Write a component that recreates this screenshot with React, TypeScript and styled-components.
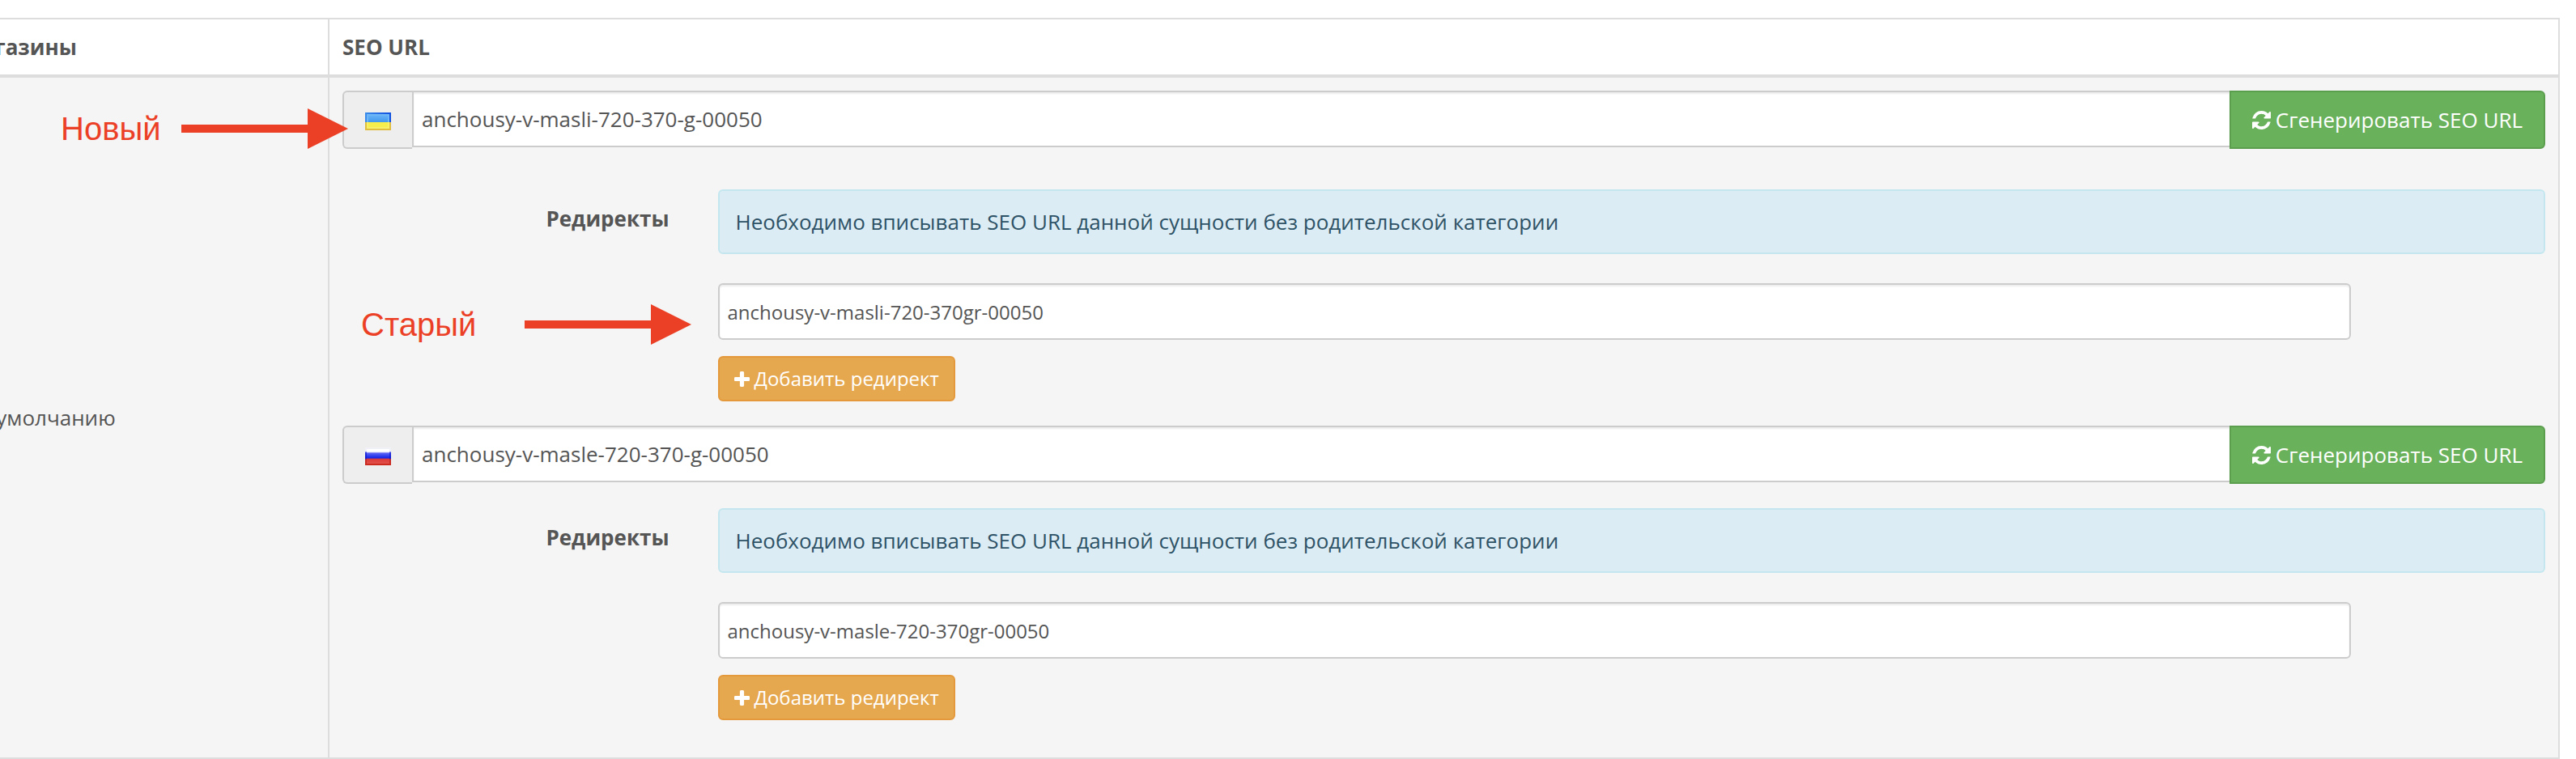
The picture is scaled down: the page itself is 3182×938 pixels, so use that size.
import React, { useState } from "react";
import styled, { createGlobalStyle } from "styled-components";

const GlobalStyle = createGlobalStyle`
  *, *::before, *::after { box-sizing: border-box; }
  body {
    margin: 0;
    background: #fff;
    color: #555;
    font-family: "Open Sans", sans-serif;
    font-size: 26px;
    line-height: 36px;
  }
`;

const Page = styled.main`
  position: relative;
  overflow: hidden;
  padding: 22px 20px 0 0;
`;

const TableScroller = styled.div`
  margin-left: -64px;
`;

const Table = styled.table`
  width: 100%;
  border: 2px solid #ddd;
  border-collapse: separate;
  border-spacing: 0;
`;

const HeadCell = styled.th`
  padding: 16px;
  text-align: left;
  font-weight: 700;
  border-bottom: 4px solid #ddd;
  & + & { border-left: 2px solid #ddd; }
`;

const StoreHeadCell = styled(HeadCell)`
  width: 467px;
`;

const Cell = styled.td`
  padding: 16px;
  vertical-align: middle;
  background: #f5f5f5;
  & + & { border-left: 2px solid #ddd; }
`;

const InputGroup = styled.div<{ $spaced?: boolean }>`
  display: flex;
  align-items: flex-start;
  margin-bottom: ${(p) => (p.$spaced ? 50 : 30)}px;
`;

const Addon = styled.label`
  display: flex;
  align-items: center;
  height: 72px;
  padding: 4px 26px 0;
  background: #eee;
  border: 2px solid #ccc;
  border-right: 0;
  border-radius: 6px 0 0 6px;
`;

const TextInput = styled.input`
  height: 70px;
  min-width: 0;
  margin: 0;
  padding: 0 10px;
  font: inherit;
  color: #555;
  background: #fff;
  border: 2px solid #ccc;
  box-shadow: inset 0 2px 2px rgba(0, 0, 0, 0.075);
  outline: 0;
`;

const UrlInput = styled(TextInput)`
  flex: 1;
  border-right: 0;
`;

const RedirectInput = styled(TextInput)`
  width: calc(100% - 240px);
  font-size: 24px;
  border-radius: 6px;
`;

const Button = styled.button`
  display: inline-flex;
  align-items: center;
  gap: 6px;
  margin: 0;
  font: inherit;
  color: #fff;
  border: 2px solid;
  white-space: nowrap;
  cursor: pointer;
`;

const GenerateButton = styled(Button)`
  padding: 16px 26px;
  background: #6ab15c;
  border-color: #5b9e4e;
  border-radius: 0 6px 6px 0;
`;

const AddButton = styled(Button)`
  padding: 8px 18px;
  font-size: 24px;
  background: #e6a84f;
  border-color: #e4993d;
  border-radius: 6px;
`;

const FormRow = styled.div`
  display: grid;
  grid-template-columns: 1fr 5fr;
  margin: 0 -30px 30px;
`;

const FieldLabel = styled.label`
  padding: 18px 30px 0;
  text-align: right;
  font-weight: 700;
`;

const FieldColumn = styled.div`
  display: flex;
  flex-direction: column;
  align-items: flex-start;
  gap: 20px;
  min-width: 0;
  padding: 0 30px;
`;

const Notice = styled.div`
  width: 100%;
  margin-bottom: 16px;
  padding: 20px;
  color: #2e5266;
  background: #dcecf5;
  border: 2px solid #c4e7ef;
  border-radius: 6px;
`;

const Annotation = styled.div<{ $top: number; $left: number; $gap: number }>`
  position: absolute;
  top: ${(p) => p.$top}px;
  left: ${(p) => p.$left}px;
  display: flex;
  align-items: center;
  gap: ${(p) => p.$gap}px;
  color: #ec4026;
  font: 40px/50px "Liberation Sans", Arial, sans-serif;
  pointer-events: none;
  svg { display: block; }
`;

const Arrow = () => (
  <svg width="206" height="50" viewBox="0 0 206 50" fill="currentColor" aria-hidden="true">
    <path d="M0 20H156V0L206 25L156 50V30H0Z" />
  </svg>
);

const RefreshIcon = () => (
  <svg width="23" height="23" viewBox="0 128 1536 1536" fill="currentColor" aria-hidden="true">
    <path d="M1511 1056q0 5-1 7-64 268-268 434.5t-478 166.5q-146 0-282.5-55t-243.5-157l-129 129q-19 19-45 19t-45-19-19-45v-448q0-26 19-45t45-19h448q26 0 45 19t19 45-19 45l-137 137q71 66 161 102t187 36q134 0 250-65t186-179q11-17 53-117 8-23 30-23h192q13 0 22.5 9.5t9.5 22.5zm25-800v448q0 26-19 45t-45 19h-448q-26 0-45-19t-19-45 19-45l138-138q-148-137-349-137-134 0-250 65t-186 179q-11 17-53 117-8 23-30 23h-199q-13 0-22.5-9.5t-9.5-22.5v-7q65-268 270-434.5t480-166.5q146 0 284 55.5t245 156.5l130-129q19-19 45-19t45 19 19 45z" />
  </svg>
);

const PlusIcon = () => (
  <svg width="19" height="19" viewBox="0 192 1408 1408" fill="currentColor" aria-hidden="true">
    <path d="M1408 800v192q0 40-28 68t-68 28h-416v416q0 40-28 68t-68 28h-192q-40 0-68-28t-28-68v-416h-416q-40 0-68-28t-28-68v-192q0-40 28-68t68-28h416v-416q0-40 28-68t68-28h192q40 0 68 28t28 68v416h416q40 0 68 28t28 68z" />
  </svg>
);

const UkraineFlag = () => (
  <svg width="32" height="22" viewBox="0 0 32 22" role="img" aria-label="Українська">
    <defs>
      <linearGradient id="ua-edge" x1="0" y1="0" x2="1" y2="0">
        <stop offset="0" stopColor="#3b8cea" />
        <stop offset="1" stopColor="#0f4fe0" />
      </linearGradient>
      <linearGradient id="ua-blue" x1="0" y1="0" x2="0" y2="1">
        <stop offset="0" stopColor="#62b0f6" />
        <stop offset="1" stopColor="#4297ee" />
      </linearGradient>
    </defs>
    <rect width="32" height="12" fill="url(#ua-edge)" />
    <rect x="2" y="2" width="28" height="10" fill="#6fb6f7" />
    <rect x="4" y="4" width="24" height="8" fill="url(#ua-blue)" />
    <rect y="12" width="32" height="10" fill="#e0bd3c" />
    <rect x="2" y="12" width="28" height="8" fill="#f8f06a" />
    <rect x="4" y="12" width="24" height="6" fill="#f6ee4c" />
  </svg>
);

const RussiaFlag = () => (
  <svg width="32" height="22" viewBox="0 0 32 22" role="img" aria-label="Русский">
    <defs>
      <linearGradient id="ru-edge" x1="0" y1="0" x2="0" y2="1">
        <stop offset="0" stopColor="#f0f0f6" />
        <stop offset="0.2" stopColor="#f0f0fa" />
        <stop offset="0.3" stopColor="#2a35dd" />
        <stop offset="0.6" stopColor="#0a18d8" />
        <stop offset="0.68" stopColor="#c42c28" />
        <stop offset="1" stopColor="#cc2a1e" />
      </linearGradient>
      <linearGradient id="ru-face" x1="0" y1="0" x2="0" y2="1">
        <stop offset="0" stopColor="#fff" />
        <stop offset="0.18" stopColor="#fff" />
        <stop offset="0.28" stopColor="#5a62f5" />
        <stop offset="0.6" stopColor="#1426e8" />
        <stop offset="0.7" stopColor="#dc3c38" />
        <stop offset="1" stopColor="#e2504a" />
      </linearGradient>
    </defs>
    <rect width="32" height="22" fill="url(#ru-edge)" />
    <rect x="2" y="2" width="28" height="18" fill="url(#ru-face)" />
  </svg>
);

interface LanguageUrl {
  code: string;
  flag: React.ReactNode;
  url: string;
  redirect: string;
}

const languages: LanguageUrl[] = [
  {
    code: "uk",
    flag: <UkraineFlag />,
    url: "anchousy-v-masli-720-370-g-00050",
    redirect: "anchousy-v-masli-720-370gr-00050",
  },
  {
    code: "ru",
    flag: <RussiaFlag />,
    url: "anchousy-v-masle-720-370-g-00050",
    redirect: "anchousy-v-masle-720-370gr-00050",
  },
];

const LanguageFields = ({ item, spaced }: { item: LanguageUrl; spaced: boolean }) => {
  const [url, setUrl] = useState(item.url);
  const [redirect, setRedirect] = useState(item.redirect);
  return (
    <>
      <InputGroup $spaced={spaced}>
        <Addon htmlFor={`url-${item.code}`}>{item.flag}</Addon>
        <UrlInput
          id={`url-${item.code}`}
          type="text"
          value={url}
          onChange={(e) => setUrl(e.target.value)}
        />
        <GenerateButton type="button">
          <RefreshIcon />
          Сгенерировать SEO URL
        </GenerateButton>
      </InputGroup>
      <FormRow>
        <FieldLabel htmlFor={`redirect-${item.code}`}>Редиректы</FieldLabel>
        <FieldColumn>
          <Notice>Необходимо вписывать SEO URL данной сущности без родительской категории</Notice>
          <RedirectInput
            id={`redirect-${item.code}`}
            type="text"
            value={redirect}
            onChange={(e) => setRedirect(e.target.value)}
          />
          <AddButton type="button">
            <PlusIcon />
            Добавить редирект
          </AddButton>
        </FieldColumn>
      </FormRow>
    </>
  );
};

export default function App() {
  return (
    <Page>
      <GlobalStyle />
      <TableScroller>
        <Table>
          <thead>
            <tr>
              <StoreHeadCell scope="col">Магазины</StoreHeadCell>
              <HeadCell scope="col">SEO URL</HeadCell>
            </tr>
          </thead>
          <tbody>
            <tr>
              <Cell>По умолчанию</Cell>
              <Cell>
                {languages.map((item, index) => (
                  <LanguageFields key={item.code} item={item} spaced={index === 0} />
                ))}
              </Cell>
            </tr>
          </tbody>
        </Table>
      </TableScroller>
      <Annotation $top={134} $left={75} $gap={26}>
        Новый
        <Arrow />
      </Annotation>
      <Annotation $top={376} $left={446} $gap={60}>
        Старый
        <Arrow />
      </Annotation>
    </Page>
  );
}
